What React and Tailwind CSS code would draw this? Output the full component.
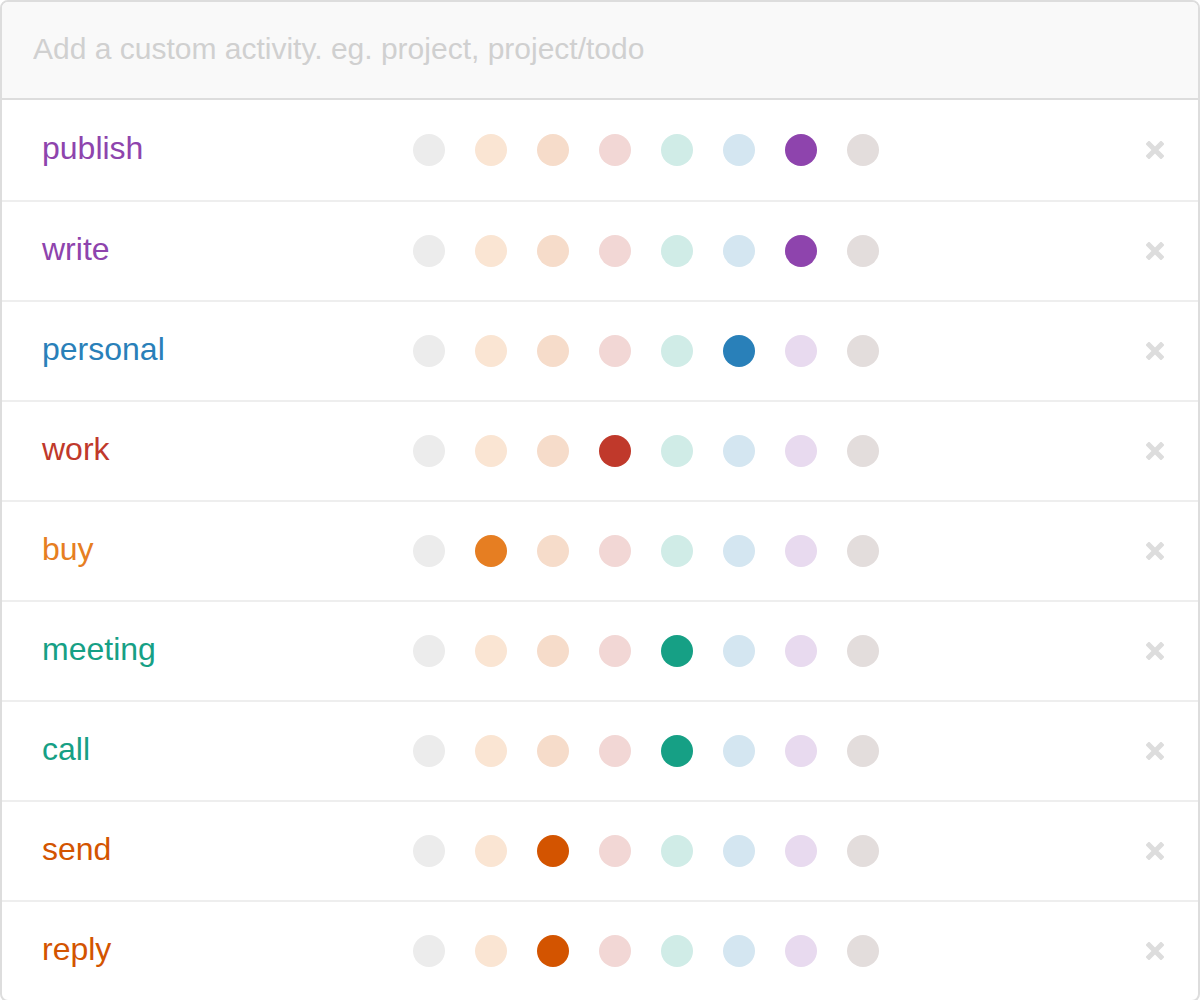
import React from "react";

const dots = [
  { light: "#ececec", full: "#bdc3c7" },
  { light: "#fae5d3", full: "#e67e22" },
  { light: "#f6dcca", full: "#d35400" },
  { light: "#f2d7d5", full: "#c0392b" },
  { light: "#d0ece7", full: "#16a085" },
  { light: "#d4e6f1", full: "#2980b9" },
  { light: "#e8daef", full: "#8e44ad" },
  { light: "#e3dddc", full: "#7f6b67" },
];

const activities = [
  { name: "publish", color: 6 },
  { name: "write", color: 6 },
  { name: "personal", color: 5 },
  { name: "work", color: 3 },
  { name: "buy", color: 1 },
  { name: "meeting", color: 4 },
  { name: "call", color: 4 },
  { name: "send", color: 2 },
  { name: "reply", color: 2 },
];

const RemoveIcon = () => (
  <svg width="18" height="18" viewBox="0 0 18 18">
    <path
      d="M3 3 L15 15 M15 3 L3 15"
      stroke="#dddddd"
      strokeWidth="5"
      strokeLinecap="square"
    />
  </svg>
);

const ActivityRow = ({ activity, first }) => {
  const color = dots[activity.color].full;
  return (
    <div
      className={
        "flex h-[100px] items-center pl-[40px] pr-[34px] " +
        (first ? "" : "border-t-2 border-[#eeeeee]")
      }
    >
      <div
        className="w-[371px] text-[32px] leading-none pb-[5px]"
        style={{ color }}
      >
        {activity.name}
      </div>
      <div className="flex gap-[30px]">
        {dots.map((d, i) => (
          <div
            key={i}
            className="h-[32px] w-[32px] rounded-full"
            style={{ backgroundColor: i === activity.color ? d.full : d.light }}
          />
        ))}
      </div>
      <div className="ml-auto flex items-center">
        <RemoveIcon />
      </div>
    </div>
  );
};

export default function App() {
  return (
    <div
      className="h-[1000px] w-[1200px] bg-white"
      style={{ fontFamily: '"Liberation Sans", Arial, sans-serif' }}
    >
      <div className="overflow-hidden rounded-[8px] border-2 border-[#dddddd] bg-white">
        <div className="flex h-[98px] items-center border-b-2 border-[#dddddd] bg-[#f9f9f9] pl-[31px] pb-[4px]">
          <input
            className="w-full bg-transparent text-[30px] text-[#555] outline-none placeholder:text-[#d0d0d0]"
            placeholder="Add a custom activity. eg. project, project/todo"
          />
        </div>
        {activities.map((a, i) => (
          <ActivityRow key={a.name} activity={a} first={i === 0} />
        ))}
      </div>
    </div>
  );
}
